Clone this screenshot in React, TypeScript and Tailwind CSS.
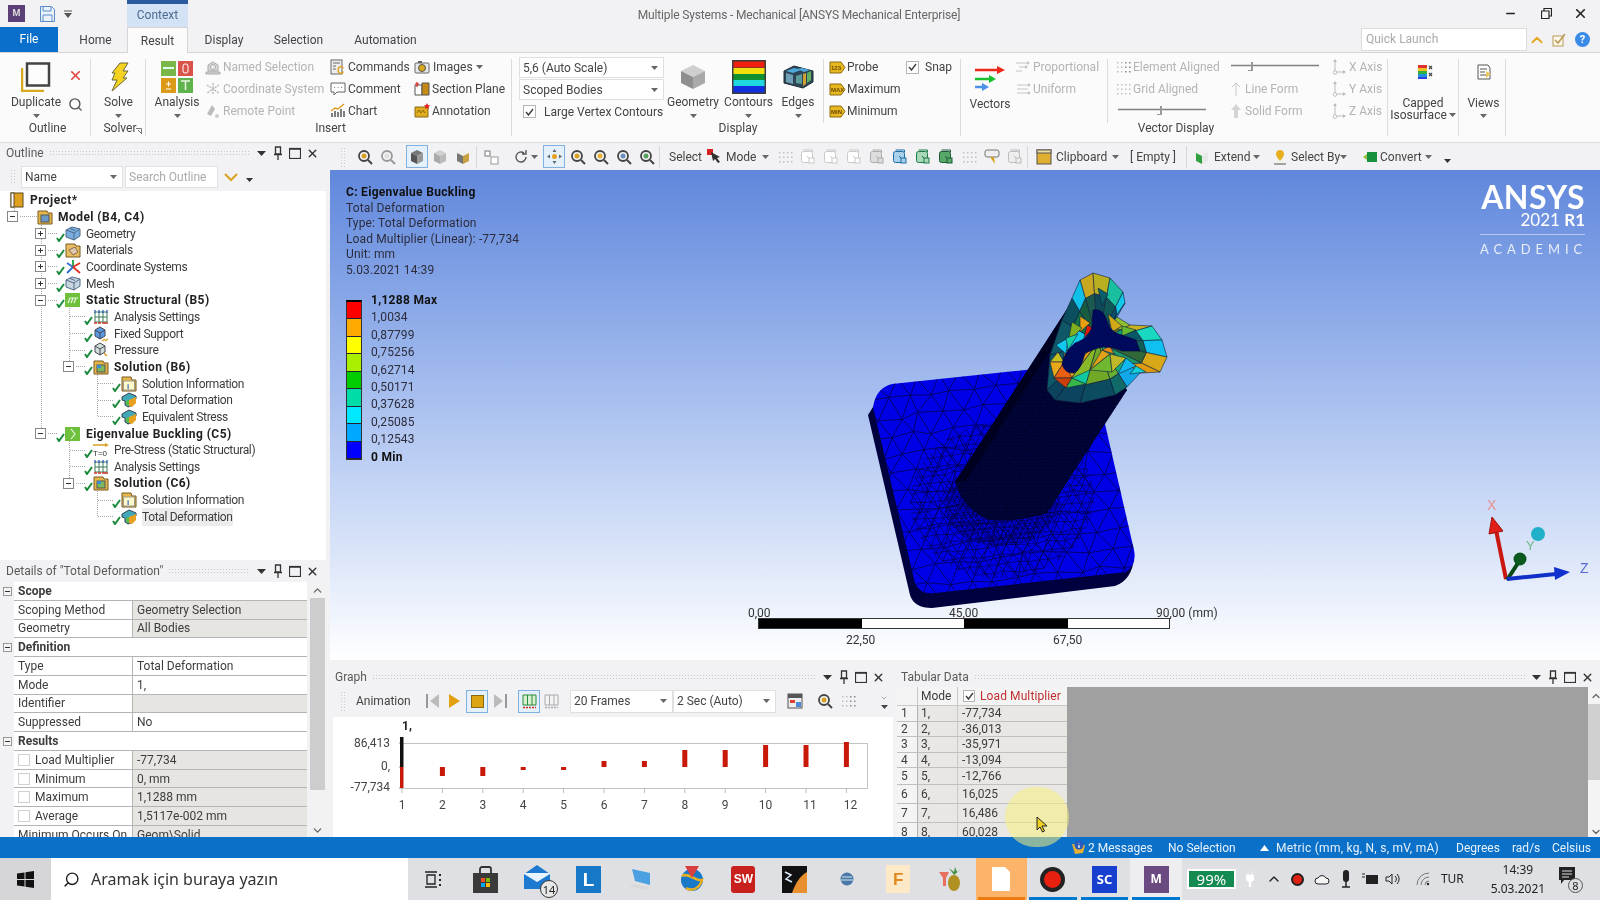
import type { ReactNode } from "react"
import { Search, X, Minus, ChevronUp } from "lucide-react"

function Svg({ w = 16, h = 16, vb, children }: { w?: number; h?: number; vb?: string; children: ReactNode }) {
  return (
    <svg width={w} height={h} viewBox={vb ?? `0 0 ${w} ${h}`} className="shrink-0 block">
      {children}
    </svg>
  )
}

const Caret = ({ c = "#666" }: { c?: string }) => (
  <svg width="7" height="4" viewBox="0 0 7 4" className="shrink-0 block">
    <path d="M0 0h7L3.5 4z" fill={c} />
  </svg>
)

/* ---------- ribbon icons ---------- */

const DuplicateIcon = () => (
  <Svg w={30} h={30}>
    <path d="M1 6v23h22" fill="none" stroke="#d8a91e" strokeWidth="2.5" />
    <rect x="6" y="1.5" width="22" height="22" fill="#fdfdfd" stroke="#444" strokeWidth="2.5" />
  </Svg>
)
const BoltIcon = () => (
  <Svg w={20} h={30}>
    <path d="M11 1h8l-5 8h5L14 16h4L3 29l5-11H3l3-7H3z" fill="#f5d21f" stroke="#6a6a3a" strokeWidth="1" />
  </Svg>
)
const AnalysisIcon = () => (
  <Svg w={32} h={32}>
    <rect x="0" y="0" width="15" height="15" fill="#7ab648" />
    <rect x="2" y="6" width="11" height="2" fill="#dfe" />
    <rect x="17" y="0" width="15" height="15" fill="#d9534a" />
    <rect x="22" y="3" width="5" height="9" rx="2" fill="none" stroke="#fff" />
    <rect x="0" y="17" width="15" height="15" fill="#dd9a18" />
    <path d="M5 23h5M7.500 20.500v5M5 28h5" stroke="#fff" />
    <rect x="17" y="17" width="15" height="15" fill="#5fb34d" />
    <path d="M20 20h9M24.500 20v9" stroke="#e8f8e0" strokeWidth="1.500" />
  </Svg>
)
const NamedIcon = () => (
  <Svg>
    <path d="M1 13h14v2H1zM3 12V6l5-3 5 3v6z" fill="#d8d8d8" stroke="#aaa" />
    <circle cx="8" cy="8" r="2.500" fill="#eee" stroke="#aaa" />
  </Svg>
)
const CoordIcon = () => (
  <Svg>
    <path d="M8 2v12M2 4l12 8M14 4L2 12" stroke="#bdbdbd" strokeWidth="1.500" strokeDasharray="2 1" />
  </Svg>
)
const RemoteIcon = () => (
  <Svg>
    <path d="M2 11l5-9 3 4-4 7z" fill="#bbb" />
    <circle cx="12" cy="13" r="2" fill="#ccc" />
  </Svg>
)
const CommandsIcon = () => (
  <Svg>
    <rect x="1" y="1" width="11" height="14" fill="#eee" stroke="#666" />
    <path d="M3 4h7M3 7h3M3 10h3" stroke="#666" />
    <text x="7" y="15" fontSize="10" fontWeight="700" fill="#e0a020" fontFamily="Liberation Sans, sans-serif">C</text>
  </Svg>
)
const CommentIcon = () => (
  <Svg>
    <path d="M1 2h14v9H7l-3 3v-3H1z" fill="#fff" stroke="#666" />
    <path d="M4 6.500h1M7.500 6.500h1M11 6.500h1" stroke="#888" />
  </Svg>
)
const ChartIcon = () => (
  <Svg>
    <path d="M2 14v-4M5 14V8M8 14V9M11 14V6M14 14V8" stroke="#555" strokeWidth="1.500" />
    <path d="M1 8l4-3 3 1 6-5" fill="none" stroke="#e09a20" strokeWidth="1.500" />
  </Svg>
)
const ImagesIcon = () => (
  <Svg>
    <rect x="1" y="4" width="14" height="10" rx="1" fill="#e8e8e8" stroke="#666" />
    <circle cx="8" cy="9" r="3.500" fill="#d8a91e" stroke="#555" />
    <rect x="4" y="2" width="4" height="2" fill="#666" />
  </Svg>
)
const SectionIcon = () => (
  <Svg>
    <path d="M1 4h7v10H1z" fill="#fff" stroke="#555" />
    <path d="M8 2h7v12H8z" fill="#c58a15" stroke="#555" />
    <path d="M3 1v5M1 3h4" stroke="#e02020" strokeWidth="1.200" />
  </Svg>
)
const AnnotationIcon = () => (
  <Svg>
    <path d="M1 4h13v10H1z" fill="#e0ac1e" stroke="#8a6a10" />
    <path d="M3 10l2-3 2 3 2-3 2 3" fill="none" stroke="#8a6a10" />
    <path d="M13 0l1 2 2 .5-1.500 1.500.3 2-1.800-1-1.800 1 .3-2L10 2.500l2-.5z" fill="#e02020" />
  </Svg>
)
const CubeIcon = () => (
  <Svg w={26} h={26}>
    <path d="M13 1l12 6-12 6L1 7z" fill="#cfcfcf" />
    <path d="M1 7l12 6v12L1 19z" fill="#8f8f8f" />
    <path d="M25 7l-12 6v12l12-6z" fill="#a9a9a9" />
  </Svg>
)
const ContoursIcon = () => (
  <Svg w={34} h={34}>
    <rect x="0" y="0" width="34" height="34" fill="#3c3c3c" />
    <rect x="1.500" y="1.500" width="31" height="6" fill="#f02010" />
    <rect x="1.500" y="8" width="31" height="6" fill="#f0e010" />
    <rect x="1.500" y="14" width="31" height="6" fill="#109030" />
    <rect x="1.500" y="20" width="31" height="6" fill="#20d8e0" />
    <rect x="1.500" y="26" width="31" height="6.500" fill="#1030e0" />
  </Svg>
)
const EdgesIcon = () => (
  <Svg w={31} h={24}>
    <path d="M1 6l10-5 19 5v11l-10 6-19-5z" fill="#2f4656" stroke="#1c2c36" />
    <path d="M3 6l8-3 7 2-8 3zM14 4l5-1 8 2-6 2z" fill="#4ba8d8" />
    <path d="M3 8l7 2v9l-7-2z" fill="#6fa0b8" />
    <path d="M20 9l3-1v11l-3 2z" fill="#d0a030" />
    <path d="M24 8l4-2v9l-4 3z" fill="#5fb060" />
    <path d="M13 11l6-2v10l-6-1z" fill="#5a9a9a" />
  </Svg>
)
const TagIcon = ({ t }: { t: string }) => (
  <svg width="17" height="13" viewBox="0 0 17 13" className="shrink-0 block">
    <path d="M1 1h11l4 5.500-4 5.500H1z" fill="#e8b820" stroke="#8a6a10" />
    <text x="2" y="9" fontSize="6" fontWeight="700" fill="#6a4a00" fontFamily="Liberation Sans, sans-serif">{t}</text>
  </svg>
)
const VectorsIcon = () => (
  <Svg w={30} h={26}>
    <path d="M0 5h23" stroke="#f02818" strokeWidth="2.500" />
    <path d="M22 1l8 4-8 4z" fill="#f02818" />
    <path d="M0 14h15" stroke="#18c030" strokeWidth="2.500" />
    <path d="M14 10l7 4-7 4z" fill="#18c030" />
    <path d="M0 22h7" stroke="#4a90e8" strokeWidth="2.500" />
    <path d="M7 18l7 4-7 4z" fill="#4a90e8" />
  </Svg>
)
const ProportionalIcon = () => (
  <Svg w={15} h={14}>
    <path d="M0 3h13M3 7h8M0 11h6" stroke="#c4c4c4" />
    <path d="M11 1l3 2-3 2zM9 5l3 2-3 2z" fill="#c4c4c4" />
  </Svg>
)
const UniformIcon = () => (
  <Svg w={15} h={14}>
    <path d="M1 3h11M1 7h11M1 11h11" stroke="#c4c4c4" />
    <path d="M12 1l3 2-3 2zM12 9l3 2-3 2z" fill="#c4c4c4" />
  </Svg>
)
const DotsIcon = ({ dark = false }: { dark?: boolean }) => (
  <Svg>
    {[2, 6, 10, 14].map((x) =>
      [3, 7.5, 12].map((y) => (
        <rect key={`${x}-${y}`} x={x} y={y} width="1.500" height="1.500" fill={dark && x > 8 ? "#888" : "#c0c0c0"} />
      ))
    )}
  </Svg>
)
const Slider = ({ w, at }: { w: number; at: number }) => (
  <svg width={w} height="11" viewBox={`0 0 ${w} 11`} className="block">
    <path d={`M0 3.500h${w}`} stroke="#808080" strokeWidth="1.500" />
    <path d={`M${at} 0h2v9h-5v-1h3z`} fill="#999" />
  </svg>
)
const AxisIcon = () => (
  <Svg w={15} h={16}>
    <path d="M3 2v11M5 13h7" stroke="#bbb" />
    <path d="M3 0l2 3H1zM14 13l-3 2v-4z" fill="#bbb" />
    <circle cx="3" cy="13.500" r="1.800" fill="#fff" stroke="#bbb" />
  </Svg>
)
const CappedIcon = () => (
  <Svg>
    <rect x="0" y="1" width="9" height="3" fill="#e03030" />
    <rect x="0" y="4" width="9" height="3" fill="#f0c020" />
    <rect x="0" y="7" width="9" height="3" fill="#30b040" />
    <rect x="0" y="10" width="9" height="3" fill="#2090e0" />
    <rect x="0" y="13" width="9" height="2" fill="#3040e0" />
    <path d="M11 2l3 3M14 2l-3 3M11 9l3 3M14 9l-3 3" stroke="#444" strokeWidth="1.200" />
  </Svg>
)
const ViewsIcon = () => (
  <Svg>
    <path d="M2 1h10l2 3v11H2z" fill="#fff" stroke="#555" />
    <path d="M4 5h7M4 8h5M4 11h6" stroke="#555" />
    <path d="M10 7l5 3-5 4z" fill="#e8c860" />
  </Svg>
)

/* ---------- toolbar icons ---------- */

const ZoomIco = ({ dot = "#d8a020", ring = "#444" }: { dot?: string; ring?: string }) => (
  <Svg>
    <circle cx="7" cy="7" r="5" fill="none" stroke={ring} strokeWidth="1.800" />
    <circle cx="7" cy="7" r="2.500" fill={dot} />
    <path d="M11 11l4 4" stroke={ring} strokeWidth="2" />
  </Svg>
)
const BoxIco = ({ top = "#777", left = "#555", right = "#999" }: { top?: string; left?: string; right?: string }) => (
  <Svg>
    <path d="M8 1l6 3-6 3-6-3z" fill={top} />
    <path d="M2 4l6 3v8l-6-3z" fill={left} />
    <path d="M14 4l-6 3v8l6-3z" fill={right} />
  </Svg>
)
const SelIco = ({ c = "#c9c9c9", h = "#fff" }: { c?: string; h?: string }) => (
  <Svg>
    <rect x="1.500" y="2.500" width="11" height="11" rx="2" fill={h} stroke={c} />
    <path d="M3.500 1h9v2M7 7l3 3" fill="none" stroke={c} />
    <rect x="9" y="9" width="5" height="5" fill={h} stroke={c} />
  </Svg>
)

/* ---------- ribbon layout ---------- */

const Big = ({ w, icon, label, ml, arrow = true }: { w: string; icon: ReactNode; label: string; ml?: string; arrow?: boolean }) => (
  <div className={`${w} ${ml ?? ""} flex flex-col items-center shrink-0`}>
    <div className="h-[37px] flex items-center justify-center">{icon}</div>
    <div className="h-[16px] leading-[16px] whitespace-nowrap">{label}</div>
    {arrow && (
      <div className="h-[12px] flex items-center">
        <Caret />
      </div>
    )}
  </div>
)

const Row = ({ icon, label, off, gap = "gap-[2px]" }: { icon: ReactNode; label: string; off?: boolean; gap?: string }) => (
  <div className={`h-[22px] flex items-center whitespace-nowrap ${gap} ${off ? "text-[#b4b4b4]" : ""}`}>
    {icon}
    <span>{label}</span>
  </div>
)

const Check = ({ size = "w-[13px] h-[13px]", on = true }: { size?: string; on?: boolean }) => (
  <span className={`${size} border border-[#b5b5b5] bg-white flex items-center justify-center shrink-0`}>
    {on && (
      <svg width="9" height="8" viewBox="0 0 9 8">
        <path d="M1 4l2.500 3L8 1" fill="none" stroke="#444" strokeWidth="1.500" />
      </svg>
    )}
  </span>
)

const Combo = ({ w, text, h = "h-[21px]" }: { w: string; text: string; h?: string }) => (
  <div className={`${w} ${h} bg-white border border-[#e0e0e0] flex items-center justify-between px-[3px] pr-[5px] shrink-0`}>
    <span className="whitespace-nowrap">{text}</span>
    <Caret />
  </div>
)

const Group = ({ w, label, children, extra, pad = "" }: { w: string; label?: string; children: ReactNode; extra?: ReactNode; pad?: string }) => (
  <div className={`${w} h-[77px] mt-[6px] border-r border-[#dcdcdc] flex flex-col shrink-0`}>
    <div className="h-[63px] flex">{children}</div>
    {label && (
      <div className={`h-[14px] leading-[13px] text-center whitespace-nowrap relative ${pad}`}>
        {label}
        {extra}
      </div>
    )}
  </div>
)

function Ribbon() {
  return (
    <div className="h-[90px] bg-[#fbfbfb] flex text-[#444] shrink-0 border-t border-[#d5d5d8] border-b-0">
      <Group w="w-[91px]" label="Outline" pad="pl-[5px]">
        <Big w="w-[60px]" ml="ml-[6px]" icon={<DuplicateIcon />} label="Duplicate" />
        <div className="w-[18px] flex flex-col items-center">
          <div className="h-[33px] flex items-center justify-center">
            <X size={15} color="#e0443a" strokeWidth={2.500} />
          </div>
          <div className="h-[4px]" />
          <div className="h-[16px] flex items-center">
            <Search size={15} color="#555" strokeWidth={2.200} />
          </div>
        </div>
      </Group>
      <Group
        w="w-[55px]"
        label="Solver"
        pad="pl-[4px]"
        extra={
          <svg width="6" height="6" viewBox="0 0 6 6" className="absolute right-[3px] top-[6px]">
            <path d="M0 .5h5.500V6M2 2l3 3" fill="none" stroke="#777" />
          </svg>
        }
      >
        <Big w="w-[55px]" icon={<BoltIcon />} label="Solve" />
      </Group>
      <Group w="w-[366px]" label="Insert" pad="pl-[4px]">
        <Big w="w-[50px]" ml="ml-[6px]" icon={<AnalysisIcon />} label="Analysis" />
        <div className="ml-[3px] w-[125px] shrink-0 -mt-[3px]">
          <Row off icon={<NamedIcon />} label="Named Selection" />
          <Row off icon={<CoordIcon />} label="Coordinate System" />
          <Row off icon={<RemoteIcon />} label="Remote Point" />
        </div>
        <div className="w-[84px] shrink-0 -mt-[3px]">
          <Row icon={<CommandsIcon />} label="Commands" />
          <Row icon={<CommentIcon />} label="Comment" />
          <Row icon={<ChartIcon />} label="Chart" />
        </div>
        <div className="shrink-0 -mt-[3px]">
          <div className="h-[22px] flex items-center gap-[3px]">
            <ImagesIcon />
            <span>Images</span>
            <Caret />
          </div>
          <Row icon={<SectionIcon />} label="Section Plane" />
          <Row icon={<AnnotationIcon />} label="Annotation" />
        </div>
      </Group>
      <Group w="w-[449px]" label="Display" pad="pl-[4px]">
        <div className="ml-[7px] w-[145px] shrink-0 flex flex-col gap-[1px] -mt-[2px]">
          <Combo w="w-[145px]" text="5,6 (Auto Scale)" />
          <Combo w="w-[145px]" text="Scoped Bodies" />
          <div className="h-[21px] flex items-center gap-[8px] pl-[4px] whitespace-nowrap">
            <Check />
            Large Vertex Contours
          </div>
        </div>
        <Big w="w-[54px]" ml="ml-[2px]" icon={<CubeIcon />} label="Geometry" />
        <Big w="w-[55px]" ml="ml-[1px]" icon={<ContoursIcon />} label="Contours" />
        <Big w="w-[44px]" icon={<EdgesIcon />} label="Edges" />
        <div className="ml-[3px] w-px h-[64px] bg-[#dcdcdc] shrink-0" />
        <div className="ml-[5px] w-[77px] shrink-0 -mt-[3px]">
          <Row icon={<TagIcon t="123" />} label="Probe" gap="gap-[1px]" />
          <Row icon={<TagIcon t="MAX" />} label="Maximum" gap="gap-[1px]" />
          <Row icon={<TagIcon t="MIN" />} label="Minimum" gap="gap-[1px]" />
        </div>
        <div className="h-[22px] -mt-[3px] flex items-center gap-[6px] whitespace-nowrap">
          <Check />
          Snap
        </div>
      </Group>
      <Group w="w-[427px]" label="Vector Display" pad="pl-[4px]">
        <Big w="w-[48px]" ml="ml-[5px]" icon={<VectorsIcon />} label="Vectors" arrow={false} />
        <div className="ml-[2px] w-[91px] shrink-0 -mt-[3px]">
          <Row off icon={<ProportionalIcon />} label="Proportional" />
          <Row off icon={<UniformIcon />} label="Uniform" />
        </div>
        <div className="w-px h-[64px] bg-[#dcdcdc] shrink-0" />
        <div className="ml-[7px] w-[113px] shrink-0 -mt-[3px]">
          <Row off icon={<DotsIcon dark />} label="Element Aligned" />
          <Row off icon={<DotsIcon />} label="Grid Aligned" />
          <div className="h-[22px] flex items-center pl-[3px]">
            <Slider w={88} at={42} />
          </div>
        </div>
        <div className="ml-[3px] w-[100px] shrink-0 -mt-[3px]">
          <div className="h-[22px] flex items-center">
            <Slider w={88} at={20} />
          </div>
          <div className="h-[22px] flex items-center gap-[4px] text-[#b4b4b4]">
            <svg width="10" height="14" viewBox="0 0 10 14">
              <path d="M5 1v13M1 5l4-4 4 4" fill="none" stroke="#c8c8c8" />
            </svg>
            Line Form
          </div>
          <div className="h-[22px] flex items-center gap-[4px] text-[#b4b4b4]">
            <svg width="10" height="14" viewBox="0 0 10 14">
              <path d="M5 0l5 6H7v8H3V6H0z" fill="#d4d4d4" />
            </svg>
            Solid Form
          </div>
        </div>
        <div className="ml-[1px] w-[55px] shrink-0 -mt-[3px]">
          <Row off icon={<AxisIcon />} label="X Axis" />
          <Row off icon={<AxisIcon />} label="Y Axis" />
          <Row off icon={<AxisIcon />} label="Z Axis" />
        </div>
      </Group>
      <Group w="w-[71px]">
        <div className="w-full flex flex-col items-center leading-[12px]">
          <div className="h-[38px] flex items-start pt-[5px] pl-[5px]">
            <CappedIcon />
          </div>
          <div>Capped</div>
          <div className="flex items-center gap-[2px]">
            Isosurface
            <Caret />
          </div>
        </div>
      </Group>
      <Group w="w-[47px]">
        <div className="w-full flex flex-col items-center pl-[3px]">
          <div className="h-[37px] flex items-start pt-[5px]">
            <ViewsIcon />
          </div>
          <div className="h-[16px] leading-[16px]">Views</div>
          <div className="h-[12px] flex items-center">
            <Caret />
          </div>
        </div>
      </Group>
    </div>
  )
}

/* ---------- panels ---------- */

const PanelControls = ({ gap = "gap-[5px]" }: { gap?: string }) => (
  <div className={`flex items-center ${gap} shrink-0 text-[#333]`}>
    <span className="w-[12px] flex justify-center">
      <svg width="9" height="5" viewBox="0 0 9 5">
        <path d="M0 0h9L4.500 5z" fill="#333" />
      </svg>
    </span>
    <svg width="12" height="14" viewBox="0 0 12 14">
      <path d="M3.500 1h5v7h-5zM2 8.500h8M6 9v5" fill="none" stroke="#333" strokeWidth="1.300" />
    </svg>
    <svg width="12" height="12" viewBox="0 0 12 12">
      <rect x=".5" y="1.500" width="11" height="10" fill="none" stroke="#333" strokeWidth="1.200" />
      <path d="M0 2h12" stroke="#333" strokeWidth="1.500" />
    </svg>
    <X size={13} strokeWidth={2.600} color="#333" />
  </div>
)

const PanelTitle = ({ title, cls }: { title: string; cls: string }) => (
  <div className={`${cls} flex items-center gap-[5px] text-[#5a5a5a] shrink-0`}>
    <span className="whitespace-nowrap">{title}</span>
    <div className="flex-1 h-[6px] bg-[radial-gradient(#c6c6c6_0.7px,transparent_0.8px)] bg-[length:3px_3px]" />
    <PanelControls />
  </div>
)

type Kind = "book" | "model" | "geo" | "mat" | "coord" | "mesh" | "static" | "eigen" | "grid" | "fixed" | "press" | "sol" | "info" | "def" | "pre"

const TreeIcon = ({ k }: { k: Kind }) => {
  if (k === "book")
    return (
      <Svg>
        <rect x="2" y="1" width="12" height="14" fill="#e0a020" stroke="#5a4a20" />
        <rect x="2" y="1" width="3" height="14" fill="#fff" stroke="#5a4a20" />
      </Svg>
    )
  if (k === "model" || k === "sol")
    return (
      <Svg>
        <path d="M1 4V2h9l1 2h4v11H1z" fill="#e4b64a" stroke="#7a5a20" />
        <rect x="4" y="6" width="8" height="7" fill={k === "sol" ? "#7cb860" : "#6a9ac8"} stroke="#555" />
        {k === "sol" && <rect x="4" y="6" width="4" height="3" fill="#3a90d0" />}
      </Svg>
    )
  if (k === "geo" || k === "mesh") {
    const f = k === "geo" ? "#7aaee0" : "#c8d4de"
    return (
      <Svg>
        <path d="M1 4l6-3 8 2v7l-6 4-8-3z" fill={f} stroke="#506a88" />
        <path d="M1 4l8 3 6-4M9 7v7M5 2.500l5 2" fill="none" stroke="#506a88" />
      </Svg>
    )
  }
  if (k === "mat")
    return (
      <Svg>
        <path d="M1 4V2h9l1 2h4v11H1z" fill="#e8bc60" stroke="#7a5a20" />
        <path d="M4 8l6-3 3 5-5 3z" fill="#e0c8b0" stroke="#8a6a50" />
      </Svg>
    )
  if (k === "coord")
    return (
      <Svg>
        <path d="M8 8V1" stroke="#20a040" strokeWidth="1.800" />
        <path d="M8 8L2 4M8 8L2 14" stroke="#3070d0" strokeWidth="1.800" />
        <path d="M8 8l7-4M8 8l7 6" stroke="#e03020" strokeWidth="1.800" />
      </Svg>
    )
  if (k === "static")
    return (
      <Svg>
        <rect x="0" y="1" width="15" height="14" fill="#6fc03c" />
        <path d="M3 11l2-5h8M6 11l2-5M9 11l2-5" stroke="#e8f8e0" strokeWidth="1.200" fill="none" />
      </Svg>
    )
  if (k === "eigen")
    return (
      <Svg>
        <rect x="0" y="1" width="15" height="14" fill="#6fc03c" />
        <path d="M6 3l4 5-4 5" stroke="#e8f8e0" fill="none" strokeWidth="1.200" />
      </Svg>
    )
  if (k === "grid")
    return (
      <Svg>
        <path d="M2 3h12v10H2zM6 3v10M10 3v10M2 8h12" fill="none" stroke="#3a7a5a" />
        <path d="M2 1v3M6 1v3M10 1v3M14 1v3" stroke="#2050c0" strokeWidth="1.200" />
        <path d="M1 14h3M5 14h3M9 14h3M12 14h3" stroke="#d03020" strokeWidth="1.500" />
      </Svg>
    )
  if (k === "fixed" || k === "press")
    return (
      <Svg>
        <path d="M2 4l5-3 5 3v6l-5 3-5-3z" fill={k === "fixed" ? "#5a9ae0" : "#d0e0d8"} stroke="#445" />
        <path d="M2 4l5 3 5-3M7 7v6" fill="none" stroke="#445" />
        <path d={k === "fixed" ? "M9 15l3-2M12 15l3-2" : "M11 11l3 3"} stroke="#d8a020" strokeWidth="1.500" />
      </Svg>
    )
  if (k === "info")
    return (
      <Svg>
        <path d="M1 4V1h9l1 3h4v11H1z" fill="#e4b64a" stroke="#7a5a20" />
        <rect x="2.500" y="5" width="11" height="9" fill="#fff8c8" stroke="#999" />
        <text x="6" y="13" fontSize="8" fontWeight="700" fill="#3060c0" fontFamily="Liberation Sans, sans-serif">i</text>
      </Svg>
    )
  if (k === "def")
    return (
      <Svg>
        <path d="M1 5l7-4 7 3v3l-3 2v4l-5 2-3-2V9L1 8z" fill="#40a8b8" stroke="#345" />
        <path d="M8 8l7-3v6l-4 4-3-1z" fill="#e8a020" />
        <path d="M8 8v6l-3-1V9z" fill="#58b848" />
      </Svg>
    )
  return (
    <svg width="16" height="16" viewBox="0 0 16 16" className="shrink-0 block">
      <path d="M0 3h13" stroke="#d8a020" strokeWidth="1.500" />
      <path d="M12 1l4 2-4 2z" fill="#d8a020" />
      <text x="0" y="14" fontSize="8" fill="#333" fontFamily="Liberation Sans, sans-serif">T=0</text>
    </svg>
  )
}

const GreenTick = () => (
  <svg width="9" height="9" viewBox="0 0 9 9" className="shrink-0 block mt-[7px] ml-[2px]">
    <path d="M1 5l2 3 5-7" fill="none" stroke="#1c8a3c" strokeWidth="2" />
  </svg>
)

const Expander = ({ open }: { open: boolean }) => (
  <span className="w-[11px] h-[11px] border border-[#888] bg-white flex items-center justify-center shrink-0 relative">
    <span className="absolute w-[5px] h-px bg-[#333]" />
    {!open && <span className="absolute w-px h-[5px] bg-[#333]" />}
  </span>
)

const treeRows: { d: number; label: string; k: Kind; bold?: boolean; exp?: "open" | "closed"; sel?: boolean }[] = [
  { d: 0, label: "Project*", k: "book", bold: true },
  { d: 1, label: "Model (B4, C4)", k: "model", bold: true, exp: "open" },
  { d: 2, label: "Geometry", k: "geo", exp: "closed" },
  { d: 2, label: "Materials", k: "mat", exp: "closed" },
  { d: 2, label: "Coordinate Systems", k: "coord", exp: "closed" },
  { d: 2, label: "Mesh", k: "mesh", exp: "closed" },
  { d: 2, label: "Static Structural (B5)", k: "static", bold: true, exp: "open" },
  { d: 3, label: "Analysis Settings", k: "grid" },
  { d: 3, label: "Fixed Support", k: "fixed" },
  { d: 3, label: "Pressure", k: "press" },
  { d: 3, label: "Solution (B6)", k: "sol", bold: true, exp: "open" },
  { d: 4, label: "Solution Information", k: "info" },
  { d: 4, label: "Total Deformation", k: "def" },
  { d: 4, label: "Equivalent Stress", k: "def" },
  { d: 2, label: "Eigenvalue Buckling (C5)", k: "eigen", bold: true, exp: "open" },
  { d: 3, label: "Pre-Stress (Static Structural)", k: "pre" },
  { d: 3, label: "Analysis Settings", k: "grid" },
  { d: 3, label: "Solution (C6)", k: "sol", bold: true, exp: "open" },
  { d: 4, label: "Solution Information", k: "info" },
  { d: 4, label: "Total Deformation", k: "def", sel: true },
]

const rowY = (i: number) => 9 + i * 16.67

function TreeGuides() {
  const v: [number, number, number][] = [
    [14, rowY(0) + 6, rowY(1) - 5],
    [41, rowY(1) + 8, rowY(14) - 5],
    [69, rowY(6) + 6, rowY(10) - 5],
    [97, rowY(10) + 6, rowY(13)],
    [69, rowY(14) + 6, rowY(17) - 5],
    [97, rowY(17) + 6, rowY(19)],
  ]
  const h = treeRows.map((r, i) => {
    if (r.d === 0) return ""
    const x = 14 + 28 * (r.d - 1)
    const end = x + (r.d === 1 ? 24 : 16)
    return `M${r.exp ? x + 6 : x} ${rowY(i)}H${end}`
  })
  return (
    <svg width="200" height="360" className="absolute left-0 top-0">
      <path
        d={v.map(([x, a, b]) => `M${x} ${a}V${b}`).join("") + h.join("")}
        stroke="#a8a8a8"
        strokeDasharray="1 1"
        fill="none"
        shapeRendering="crispEdges"
      />
    </svg>
  )
}

function Tree() {
  return (
    <div className="flex-1 bg-white relative text-[#3c3c3c] mr-[4px]">
      <TreeGuides />
      <div className="relative pt-[1px]">
        {treeRows.map((r, i) => {
          const textX = 30 + 28 * r.d
          return (
            <div
              key={i}
              className="h-[16.67px] flex items-center whitespace-nowrap"
              style={{ paddingLeft: r.d === 0 ? 10 : textX - 51 }}
            >
              {r.d > 0 && (
                <>
                  <span className="w-[11px] mr-[8px] shrink-0">{r.exp && <Expander open={r.exp === "open"} />}</span>
                  <span className="w-[12px] shrink-0">{r.d > 1 && <GreenTick />}</span>
                </>
              )}
              <span className="w-[14px] flex justify-center shrink-0">
                <TreeIcon k={r.k} />
              </span>
              <span
                className={`ml-[6px] ${r.bold ? "font-bold text-[#222] tracking-[0.45px]" : "tracking-[-0.35px]"} ${
                  r.sel ? "bg-[#ececec]" : ""
                }`}
              >
                {r.label}
              </span>
            </div>
          )
        })}
      </div>
    </div>
  )
}

type Detail =
  | { section: string }
  | { label: string; value: string; grey?: boolean; box?: boolean }

const details: Detail[] = [
  { section: "Scope" },
  { label: "Scoping Method", value: "Geometry Selection", grey: true },
  { label: "Geometry", value: "All Bodies", grey: true },
  { section: "Definition" },
  { label: "Type", value: "Total Deformation" },
  { label: "Mode", value: "1," },
  { label: "Identifier", value: "", grey: true },
  { label: "Suppressed", value: "No" },
  { section: "Results" },
  { label: "Load Multiplier", value: "-77,734", grey: true, box: true },
  { label: "Minimum", value: "0, mm", grey: true, box: true },
  { label: "Maximum", value: "1,1288 mm", grey: true, box: true },
  { label: "Average", value: "1,5117e-002 mm", grey: true, box: true },
  { label: "Minimum Occurs On", value: "Geom\\Solid", grey: true },
]

function DetailsTable() {
  return (
    <div className="h-[255px] flex overflow-hidden text-[#3c3c3c] shrink-0">
      <div className="w-[307px] shrink-0">
        {details.map((d, i) =>
          "section" in d ? (
            <div key={i} className="h-[18.77px] flex items-center">
              <span className="w-[14px] flex justify-center shrink-0">
                <span className="w-[9px] h-[9px] border border-[#999] bg-[#f4f4f4] flex items-center justify-center">
                  <span className="w-[5px] h-px bg-[#333]" />
                </span>
              </span>
              <span className="flex-1 h-full bg-white border-b border-[#b4b4b4] pl-[4px] font-bold flex items-center">
                {d.section}
              </span>
            </div>
          ) : (
            <div key={i} className="h-[18.77px] flex pl-[14px]">
              <span className="w-[119px] h-full shrink-0 bg-white border-b border-r border-[#b4b4b4] flex items-center pl-[4px] whitespace-nowrap overflow-hidden">
                {d.box && <span className="w-[12px] h-[12px] border border-[#d0d0d0] bg-white mr-[5px] shrink-0" />}
                {d.label}
              </span>
              <span
                className={`flex-1 h-full border-b border-[#b4b4b4] flex items-center pl-[4px] whitespace-nowrap ${
                  d.grey ? "bg-[#e6e5e1]" : "bg-white"
                }`}
              >
                {d.value}
              </span>
            </div>
          )
        )}
      </div>
      <div className="w-[15px] ml-[3px] bg-[#f2f2f2] flex flex-col items-center">
        <div className="h-[16px] flex items-center">
          <ChevronUp size={13} color="#666" strokeWidth={2.500} />
        </div>
        <div className="w-full h-[192px] bg-[#cdcdcd]" />
        <div className="flex-1" />
        <div className="h-[18px] flex items-start rotate-180">
          <ChevronUp size={13} color="#666" strokeWidth={2.500} />
        </div>
      </div>
    </div>
  )
}

function LeftColumn() {
  return (
    <div className="w-[330px] shrink-0 flex flex-col bg-[#f2f2f4] border-t border-[#dcdcdc]">
      <PanelTitle title="Outline" cls="h-[20px] pl-[6px] pr-[7px] mr-[4px]" />
      <div className="h-[28px] flex items-center pl-[10px] gap-[2px] text-[#444] shrink-0">
        <span className="w-[7px] h-[16px] mr-[2px] bg-[radial-gradient(#c8c8c8_0.7px,transparent_0.8px)] bg-[length:3px_3px]" />
        <Combo w="w-[102px]" h="h-[22px]" text="Name" />
        <div className="w-[93px] h-[22px] bg-white border border-[#e0e0e0] flex items-center px-[3px] text-[#aaa] whitespace-nowrap">
          Search Outline
        </div>
        <svg width="14" height="9" viewBox="0 0 14 9" className="ml-[4px]">
          <path d="M1 1l6 6 6-6" fill="none" stroke="#d8a020" strokeWidth="2" />
        </svg>
        <span className="ml-[6px] mt-[6px]">
          <Caret c="#333" />
        </span>
      </div>
      <Tree />
      <PanelTitle title={'Details of "Total Deformation"'} cls="h-[22px] pl-[6px] pr-[7px] mr-[4px]" />
      <DetailsTable />
    </div>
  )
}

/* ---------- graphics toolbar ---------- */

const Sel = ({ children, w = "w-[22px]" }: { children: ReactNode; w?: string }) => (
  <span className={`${w} h-[23px] flex items-center justify-center border border-[#7fb2e0] bg-[#e4f0fb] shrink-0`}>
    {children}
  </span>
)
const Cell = ({ children, w = "w-[23px]" }: { children: ReactNode; w?: string }) => (
  <span className={`${w} flex items-center justify-center shrink-0`}>{children}</span>
)
const TSep = () => <span className="block w-px h-[22px] bg-[#d8d8d8] shrink-0" />

function GraphicsToolbar() {
  return (
    <div className="h-[28px] flex items-center text-[#444] bg-[#f2f2f4] border-t border-[#dcdcdc] shrink-0 whitespace-nowrap">
      <span className="ml-[10px] w-[6px] h-[20px] mr-[7px] bg-[radial-gradient(#c8c8c8_0.7px,transparent_0.8px)] bg-[length:3px_3px] shrink-0" />
      <Cell>
        <ZoomIco />
      </Cell>
      <Cell>
        <ZoomIco dot="#e0e0e0" ring="#999" />
      </Cell>
      <span className="ml-[7px]">
        <Sel>
          <BoxIco />
        </Sel>
      </span>
      <Cell>
        <BoxIco top="#d0d0d0" left="#aaa" right="#bbb" />
      </Cell>
      <Cell>
        <BoxIco top="#eee" left="#777" right="#c8a040" />
      </Cell>
      <span className="ml-[2px]">
        <TSep />
      </span>
      <span className="ml-[2px]">
        <Cell>
          <Svg>
            <rect x="2" y="2" width="5" height="5" fill="#fff" stroke="#777" />
            <rect x="8" y="8" width="7" height="7" fill="#fff" stroke="#999" />
          </Svg>
        </Cell>
      </span>
      <span className="ml-[10px]">
        <Cell w="w-[18px]">
          <Svg>
            <path d="M13 8a5 5 0 1 1-2-4M13 1v4H9" fill="none" stroke="#555" strokeWidth="1.400" />
          </Svg>
        </Cell>
      </span>
      <Cell w="w-[8px]">
        <Caret />
      </Cell>
      <span className="ml-[5px]">
        <Sel>
          <svg width="15" height="15" viewBox="0 0 15 15">
            <path d="M7.500 0l2 3h-4zM7.500 15l-2-3h4zM0 7.500l3-2v4zM15 7.500l-3 2v-4z" fill="#666" />
            <circle cx="7.500" cy="7.500" r="2.500" fill="#e8a020" />
          </svg>
        </Sel>
      </span>
      <span className="ml-px flex">
        <Cell>
          <ZoomIco />
        </Cell>
        <Cell>
          <ZoomIco dot="#e8b030" />
        </Cell>
        <Cell>
          <ZoomIco dot="#6a90c0" />
        </Cell>
        <Cell>
          <ZoomIco dot="#58a060" />
        </Cell>
      </span>
      <span className="ml-[1px]">
        <TSep />
      </span>
      <span className="ml-[9px] w-[38px] shrink-0">Select</span>
      <span className="w-[19px] shrink-0">
        <svg width="15" height="15" viewBox="0 0 15 15">
          <rect x="0" y="0" width="6" height="6" fill="#d82020" />
          <path d="M4 3l9 5-3 1 3 4-2 1-3-4-2 2z" fill="#333" />
        </svg>
      </span>
      <span className="w-[36px] shrink-0">Mode</span>
      <Caret />
      <span className="ml-[4px] flex">
        <Cell w="w-[23px]">
          <DotsIcon />
        </Cell>
        <Cell>
          <SelIco />
        </Cell>
        <Cell>
          <SelIco />
        </Cell>
        <Cell>
          <SelIco />
        </Cell>
        <Cell>
          <SelIco c="#aaa" h="#ddd" />
        </Cell>
        <Cell>
          <SelIco c="#1c6ea8" h="#a8d0e8" />
        </Cell>
        <Cell>
          <SelIco c="#1c7a4a" h="#a8d8b8" />
        </Cell>
        <Cell>
          <SelIco c="#1c5a3a" h="#58a868" />
        </Cell>
        <Cell>
          <DotsIcon />
        </Cell>
        <Cell>
          <Svg>
            <rect x="1" y="1" width="14" height="7" rx="2" fill="#eee" stroke="#777" />
            <path d="M6 8l5 7-1-7z" fill="#d8a020" />
          </Svg>
        </Cell>
        <Cell>
          <SelIco c="#bbb" h="#eee" />
        </Cell>
      </span>
      <span className="ml-[1px]">
        <TSep />
      </span>
      <span className="ml-[8px] mr-[4px] shrink-0">
        <Svg>
          <rect x="1" y="1" width="14" height="14" fill="#e0ae30" stroke="#555" />
          <rect x="1" y="1" width="14" height="3" fill="#f0e0a0" stroke="#555" />
        </Svg>
      </span>
      <span className="w-[56px] shrink-0">Clipboard</span>
      <Caret />
      <span className="ml-[11px] w-[49px] shrink-0">[ Empty ]</span>
      <span className="ml-[7px]">
        <TSep />
      </span>
      <span className="ml-[7px] mr-[4px] shrink-0">
        <BoxIco top="#eee" left="#30a040" right="#e8e8e8" />
      </span>
      <span className="w-[39px] shrink-0">Extend</span>
      <Caret />
      <span className="ml-[14px] mr-[5px] shrink-0">
        <Svg w={12} h={16}>
          <path d="M6 1a4 4 0 0 1 4 4c0 3-4 7-4 7S2 8 2 5a4 4 0 0 1 4-4z" fill="#e8b020" />
          <path d="M0 15h12" stroke="#555" />
        </Svg>
      </span>
      <span className="w-[49px] shrink-0">Select By</span>
      <Caret />
      <span className="ml-[16px] mr-[3px] shrink-0">
        <Svg w={14} h={14}>
          <path d="M0 7l4-3v6z" fill="#9ac040" />
          <rect x="4" y="2" width="10" height="10" fill="#189040" />
        </Svg>
      </span>
      <span className="w-[45px] shrink-0">Convert</span>
      <Caret />
      <span className="ml-[12px] mt-[8px]">
        <Caret c="#333" />
      </span>
    </div>
  )
}

/* ---------- viewport ---------- */

const legend = [
  ["1,1288 Max", "#ff0000", true],
  ["1,0034", "#ffaa00", false],
  ["0,87799", "#ffff00", false],
  ["0,75256", "#aaee00", false],
  ["0,62714", "#00cc00", false],
  ["0,50171", "#00dca8", false],
  ["0,37628", "#00e8ff", false],
  ["0,25085", "#00a8ff", false],
  ["0,12543", "#0000ff", false],
  ["0 Min", "", true],
] as const

function Legend() {
  return (
    <div className="absolute left-[16px] top-[130px] flex">
      <div className="w-[16px] flex flex-col border border-[#333] border-t-[2px] border-t-black h-[160px]">
        {legend.slice(0, 9).map(([l, c]) => (
          <div key={l} className="flex-1 border-b border-[#223]" style={{ background: c }} />
        ))}
      </div>
      <div className="ml-[9px] -mt-[8px] tracking-[0.1px]">
        {legend.map(([l, , b]) => (
          <div key={l} className={`h-[17.4px] leading-[17.4px] whitespace-nowrap ${b ? "font-bold text-[#111] tracking-[0.3px]" : "text-[#2c2c3c]"}`}>
            {l}
          </div>
        ))}
      </div>
    </div>
  )
}

/* seeded jitter so the mesh is stable between renders */
function mulberry(a: number) {
  return () => {
    a |= 0
    a = (a + 0x6d2b79f5) | 0
    let t = Math.imul(a ^ (a >>> 15), 1 | a)
    t = (t + Math.imul(t ^ (t >>> 7), 61 | t)) ^ t
    return ((t ^ (t >>> 14)) >>> 0) / 4294967296
  }
}

// jittered triangular lattice inside a box, returned as one path
function lattice(step: number, seed: number, x0: number, y0: number, x1: number, y1: number) {
  const rnd = mulberry(seed)
  const rows = Math.ceil((y1 - y0) / (step * 0.866)) + 1
  const cols = Math.ceil((x1 - x0) / step) + 2
  const p: [number, number][][] = []
  for (let j = 0; j < rows; j++) {
    const row: [number, number][] = []
    for (let i = 0; i < cols; i++) {
      row.push([
        x0 + i * step + (j % 2 ? step / 2 : 0) + (rnd() - 0.5) * step * 0.3,
        y0 + j * step * 0.866 + (rnd() - 0.5) * step * 0.3,
      ])
    }
    p.push(row)
  }
  let d = ""
  const seg = (a: [number, number], b: [number, number]) => {
    d += `M${a[0].toFixed(1)} ${a[1].toFixed(1)}L${b[0].toFixed(1)} ${b[1].toFixed(1)}`
  }
  for (let j = 0; j < rows; j++) {
    for (let i = 0; i < cols; i++) {
      if (i + 1 < cols) seg(p[j][i], p[j][i + 1])
      if (j + 1 < rows) {
        seg(p[j][i], p[j + 1][i])
        const k = j % 2 ? i + 1 : i - 1
        if (k >= 0 && k < cols) seg(p[j][i], p[j + 1][k])
      }
    }
  }
  return d
}

const headOuter: [number, number, string, string][] = [
  [240, 30, "#c8a820", "#1c5a50"],
  [253, 23, "#b8b020", "#104a58"],
  [270, 28, "#18c0a0", "#105858"],
  [283, 42, "#10c8e8", "#08506a"],
  [285, 53, "#10a8f0", "#286850"],
  [277, 67, "#90c030", "#687820"],
  [290, 75, "#c8b020", "#10a070"],
  [312, 76, "#18d8c0", "#085868"],
  [322, 90, "#10c0f0", "#106058"],
  [327, 107, "#d8a818", "#306838"],
  [320, 122, "#e09a10", "#209868"],
  [300, 123, "#10a8e8", "#18a878"],
  [287, 137, "#106a68", "#68b030"],
  [275, 145, "#0c4c60", "#70a828"],
  [240, 153, "#0c4460", "#88b828"],
  [215, 150, "#0c4460", "#e0a018"],
  [207, 140, "#0c5868", "#d8b018"],
  [210, 105, "#105868", "#10c8e8"],
  [222, 70, "#0c5060", "#107048"],
  [232, 48, "#10c0e8", "#185c40"],
]

const headPatch: [string, string][] = [
  ["247,75 253,78 244,88", "#e81808"],
  ["240,66 250,73 240,82", "#e8a010"],
  ["232,72 242,78 228,92", "#80b020"],
  ["216,95 228,88 226,104", "#10c8f0"],
  ["226,88 238,84 228,100", "#18d0a8"],
  ["210,112 218,102 224,112", "#c8c020"],
  ["210,112 224,112 214,128", "#e8a818"],
  ["214,128 224,112 232,128", "#e86010"],
  ["214,128 232,128 226,138", "#c84008"],
  ["226,138 232,128 246,134", "#38b848"],
  ["246,134 232,128 250,120", "#10c8a0"],
  ["250,120 262,100 270,104", "#e0a018"],
  ["250,120 270,104 272,122", "#70b830"],
  ["270,104 286,108 272,122", "#c0b828"],
  ["286,108 296,116 278,124", "#10b8f0"],
  ["296,116 306,122 290,124", "#10d0d8"],
  ["262,100 270,96 274,104", "#e88810"],
  ["268,64 282,76 272,82", "#d0a818"],
  ["282,76 296,80 282,86", "#68b830"],
  ["258,38 268,44 262,56", "#0a6068"],
]

const platePath = "M33 157Q36 138 52 134L251 113L294 300Q297 314 286 322L95 343Q80 345 75 333Z"
const colPath = "M115 232L233 50L287 140L207 263Q180 272 150 270Q125 262 115 232Z"

function Model() {
  const cx = 258
  const cy = 92
  return (
    <svg width="360" height="380" viewBox="0 0 360 380" className="absolute left-[510px] top-[80px]">
      <defs>
        <clipPath id="plate">
          <path d={platePath} />
        </clipPath>
        <clipPath id="col">
          <path d={colPath} />
        </clipPath>
        <clipPath id="mid">
          <ellipse cx="160" cy="250" rx="92" ry="78" />
        </clipPath>
        <clipPath id="near">
          <ellipse cx="160" cy="252" rx="58" ry="44" />
        </clipPath>
      </defs>
      <path d="M28 165L70 345Q74 358 92 358L275 336Q292 330 294 308L290 290L33 157Z" fill="#00003e" />
      <path d={platePath} fill="#0000e6" />
      <g clipPath="url(#plate)">
        <g transform="rotate(-6 160 230)">
          <path d={lattice(22, 11, 0, 80, 340, 380)} stroke="#000058" strokeWidth="0.8" fill="none" />
          <g clipPath="url(#mid)">
            <path d={lattice(10, 5, 40, 140, 280, 340)} stroke="#000058" strokeWidth="0.7" fill="none" />
          </g>
          <g clipPath="url(#near)">
            <path d={lattice(5, 9, 90, 190, 230, 310)} stroke="#000050" strokeWidth="0.7" fill="none" />
          </g>
        </g>
      </g>
      <path d={colPath} fill="#000740" />
      <g clipPath="url(#col)">
        <path d={lattice(4, 3, 100, 40, 300, 280)} stroke="#000020" strokeWidth="0.5" fill="none" />
      </g>
      <path d="M115 232L125 232L238 58L233 50Z" fill="#000020" />
      <g stroke="#10203a" strokeWidth="0.6" strokeLinejoin="round">
        {headOuter.map((p, i) => {
          const n = headOuter[(i + 1) % headOuter.length]
          const mx = p[0] + (cx - p[0]) * 0.3
          const my = p[1] + (cy - p[1]) * 0.3
          const nx = n[0] + (cx - n[0]) * 0.3
          const ny = n[1] + (cy - n[1]) * 0.3
          return (
            <g key={i}>
              <polygon points={`${p[0]},${p[1]} ${n[0]},${n[1]} ${nx},${ny} ${mx},${my}`} fill={p[2]} />
              <polygon points={`${mx},${my} ${nx},${ny} ${cx},${cy}`} fill={p[3]} />
            </g>
          )
        })}
        {headPatch.map(([pts, c], i) => (
          <polygon key={i} points={pts} fill={c} />
        ))}
      </g>
      <path
        d="M253 60Q262 58 266 68Q268 78 276 83L296 90L300 101L282 101Q268 95 258 98L245 103Q241 120 234 123Q225 124 222 114Q224 102 235 93Q250 88 252 76Z"
        fill="#000a5c"
        stroke="#000438"
        strokeWidth="0.6"
      />
    </svg>
  )
}

function Triad() {
  return (
    <svg width="130" height="130" viewBox="0 0 130 130" className="absolute left-[1140px] top-[310px]">
      <text x="17" y="30" fontSize="14" fill="#e89090" fontFamily="Liberation Sans, sans-serif">X</text>
      <text x="56" y="70" fontSize="13" fill="#70b888" fontFamily="Liberation Sans, sans-serif">Y</text>
      <text x="110" y="93" fontSize="14" fill="#5868d8" fontFamily="Liberation Sans, sans-serif">Z</text>
      <path d="M36 99L26 50" stroke="#c81810" strokeWidth="4" />
      <path d="M22 37L19 54L33 51Z" fill="#e02018" stroke="#a01008" />
      <path d="M37 100L50 80" stroke="#0a4a18" strokeWidth="4" />
      <circle cx="50" cy="79" r="6.500" fill="#0a5a20" />
      <path d="M37 99L86 94" stroke="#1030c8" strokeWidth="4" />
      <path d="M100 92L84 87L85 100Z" fill="#1030d0" />
      <circle cx="68" cy="54" r="7" fill="#20b0c8" />
    </svg>
  )
}

function ScaleBar() {
  const top = ["0,00", "45,00", "90,00 (mm)"]
  return (
    <div className="absolute left-[428px] top-[434px] w-[412px] text-[#333]">
      <div className="relative h-[14px]">
        <span className="absolute left-[-10px] top-0">{top[0]}</span>
        <span className="absolute left-[191px] top-0">{top[1]}</span>
        <span className="absolute left-[398px] top-0 whitespace-nowrap">{top[2]}</span>
      </div>
      <div className="h-[11px] flex border border-[#333] bg-white">
        <div className="w-[103px] bg-black" />
        <div className="w-[102px]" />
        <div className="w-[104px] bg-black" />
      </div>
      <div className="relative h-[14px] mt-[2px]">
        <span className="absolute left-[88px] top-0">22,50</span>
        <span className="absolute left-[295px] top-0">67,50</span>
      </div>
    </div>
  )
}

function Viewport() {
  return (
    <div className="h-[490px] relative overflow-hidden bg-linear-to-b from-[#6087dc] to-[#ffffff] shrink-0 text-[#2c2c3c]">
      <div className="absolute left-[16px] top-[15px] leading-[15.6px] whitespace-nowrap tracking-[0.13px]">
        <div className="font-bold text-[#111] tracking-[0.3px]">C: Eigenvalue Buckling</div>
        <div>Total Deformation</div>
        <div>Type: Total Deformation</div>
        <div>Load Multiplier (Linear): -77,734</div>
        <div>Unit: mm</div>
        <div>5.03.2021 14:39</div>
      </div>
      <Legend />
      <div className="absolute right-[15px] top-[13px] w-[105px] text-white font-['Lato',sans-serif] text-right">
        <div className="text-[32px] leading-[28px] font-bold tracking-[0.5px] whitespace-nowrap">ANSYS</div>
        <div className="text-[17px] leading-[18px] whitespace-nowrap">
          2021 <b>R1</b>
        </div>
        <div className="h-px bg-[#b8ccf0] mt-[5px]" />
        <div className="text-[13px] leading-[16px] mt-[6px] tracking-[4.9px] whitespace-nowrap text-left text-[#e8eefa]">ACADEMIC</div>
      </div>
      <Model />
      <ScaleBar />
      <Triad />
    </div>
  )
}

/* ---------- bottom panels ---------- */

const bars: [number, number][] = [
  [765, 786],
  [765, 774],
  [765, 774],
  [765, 768],
  [765, 768],
  [759, 765],
  [759, 765],
  [748, 765],
  [748, 765],
  [743, 765],
  [743, 765],
  [740, 765],
]

function Chart() {
  const x = (i: number) => 402 + i * 40.4
  return (
    <svg width="560" height="122" viewBox="333 715 560 122" className="block">
      <rect x="402.500" y="741.500" width="465" height="45" fill="#fff" stroke="#c4c4c4" />
      {bars.map((_, i) => (
        <path key={i} d={`M${x(i)} 786v5`} stroke="#bbb" />
      ))}
      <path d="M399 741h3M399 765h3M399 786h3" stroke="#999" />
      <g fontSize="12" fill="#444" fontFamily="Roboto, sans-serif" textAnchor="end">
        <text x="390" y="745">86,413</text>
        <text x="390" y="768">0,</text>
        <text x="390" y="789">-77,734</text>
      </g>
      <g fontSize="12" fill="#444" fontFamily="Roboto, sans-serif" textAnchor="middle">
        {bars.map((_, i) => (
          <text key={i} x={i > 9 ? x(i) + 4 : x(i)} y="807">{i + 1}</text>
        ))}
      </g>
      <text x="402" y="728" fontSize="12" fontWeight="700" fill="#222" fontFamily="Roboto, sans-serif">1,</text>
      <rect x="400" y="735" width="3.500" height="30" fill="#111" />
      {bars.map(([a, b], i) => (
        <rect key={i} x={x(i) - (i === 0 ? 2 : 2.5)} y={a} width={i === 0 ? 3.5 : 5} height={b - a} fill="#c81808" />
      ))}
    </svg>
  )
}

function GraphPanel() {
  return (
    <div className="w-[560px] ml-[3px] shrink-0 flex flex-col text-[#444]">
      <PanelTitle title="Graph" cls="h-[20px] pl-[2px] pr-[8px] mt-[7px]" />
      <div className="h-[28px] flex items-center shrink-0 whitespace-nowrap">
        <span className="ml-[7px] mr-[10px] w-[6px] h-[20px] bg-[radial-gradient(#c8c8c8_0.7px,transparent_0.8px)] bg-[length:3px_3px] shrink-0" />
        <span className="w-[65px] shrink-0">Animation</span>
        <span className="ml-[2px] w-[20px] flex justify-center shrink-0">
          <Svg w={14} h={14}>
            <path d="M1 0v14" stroke="#999" strokeWidth="2" />
            <path d="M13 0L4 7l9 7z" fill="#bbb" />
          </Svg>
        </span>
        <span className="ml-[1px] w-[20px] flex justify-center shrink-0">
          <Svg w={12} h={14}>
            <path d="M1 0l11 7-11 7z" fill="#e0a010" />
          </Svg>
        </span>
        <span className="ml-[2px]">
          <Sel>
            <span className="w-[13px] h-[13px] bg-[#dca410] border border-[#8a6a10]" />
          </Sel>
        </span>
        <span className="ml-[2px] w-[20px] flex justify-center shrink-0">
          <Svg w={14} h={14}>
            <path d="M1 0l9 7-9 7z" fill="#bbb" />
            <path d="M13 0v14" stroke="#999" strokeWidth="2" />
          </Svg>
        </span>
        <span className="ml-[8px]">
          <Sel>
            <Svg w={15} h={15}>
              <path d="M1 1h13v10H1zM5.500 1v10M10 1v10" fill="#d8f0d0" stroke="#2a8a3a" />
              <path d="M1 13.500h13" stroke="#d03020" strokeDasharray="2 1" strokeWidth="1.500" />
            </Svg>
          </Sel>
        </span>
        <span className="w-[23px] flex justify-center shrink-0">
          <Svg w={15} h={15}>
            <path d="M1 1h13v10H1zM5.500 1v10M10 1v10" fill="#f4f4f4" stroke="#aaa" />
            <path d="M1 13.500h13" stroke="#aaa" strokeDasharray="2 1" strokeWidth="1.500" />
          </Svg>
        </span>
        <span className="ml-[7px] flex">
          <Combo w="w-[103px]" h="h-[23px]" text="20 Frames" />
          <Combo w="w-[103px]" h="h-[23px]" text="2 Sec (Auto)" />
        </span>
        <span className="ml-[11px] shrink-0">
          <Svg>
            <rect x="1" y="1" width="14" height="14" fill="#eee" stroke="#555" />
            <rect x="1" y="1" width="14" height="4" fill="#555" />
            <path d="M3 7h5v3H3z" fill="#e04030" />
            <path d="M9 9h5v5H9z" fill="#4a8ad8" />
          </Svg>
        </span>
        <span className="ml-[14px] shrink-0">
          <ZoomIco />
        </span>
        <span className="ml-[7px] shrink-0">
          <DotsIcon dark />
        </span>
        <span className="ml-[24px] flex flex-col items-center gap-[3px] shrink-0">
          <ChevronUp size={8} className="rotate-180" color="#888" />
          <Caret c="#444" />
        </span>
      </div>
      <div className="h-[122px] bg-white mt-[2px]">
        <Chart />
      </div>
    </div>
  )
}

const tabular: [string, string, string, string][] = [
  ["1", "1,", "-77,734", "h-[15.6px]"],
  ["2", "2,", "-36,013", "h-[15.6px]"],
  ["3", "3,", "-35,971", "h-[15.6px]"],
  ["4", "4,", "-13,094", "h-[15.6px]"],
  ["5", "5,", "-12,766", "h-[17px]"],
  ["6", "6,", "16,025", "h-[18.7px]"],
  ["7", "7,", "16,486", "h-[18.7px]"],
  ["8", "8,", "60,028", "h-[18.7px]"],
]

function TabularPanel() {
  return (
    <div className="w-[707px] ml-[4px] shrink-0 flex flex-col text-[#3c3c3c]">
      <PanelTitle title="Tabular Data" cls="h-[20px] pl-[4px] pr-[10px] mt-[7px]" />
      <div className="flex-1 flex overflow-hidden">
        <div className="w-[170px] shrink-0 bg-[#f4f4f4]">
          <div className="h-[19px] flex border-b border-[#c8c8c8]">
            <span className="w-[21px] border-r border-[#c8c8c8] shrink-0" />
            <span className="w-[40px] border-r border-[#c8c8c8] pl-[3px] leading-[18px] shrink-0">Mode</span>
            <span className="flex-1 flex items-center gap-[5px] pl-[5px] text-[#c03030] whitespace-nowrap tracking-[0.1px]">
              <Check size="w-[12px] h-[12px]" />
              Load Multiplier
            </span>
          </div>
          {tabular.map(([n, m, v, h]) => (
            <div key={n} className={`flex border-b border-[#c0c0c0] ${h}`}>
              <span className="w-[21px] border-r border-[#b0b0b0] pl-[4px] flex items-center bg-[#f4f4f4] shrink-0">{n}</span>
              <span className="w-[40px] border-r border-[#c8c8c8] pl-[3px] flex items-center bg-[#e8e7e3] shrink-0">{m}</span>
              <span className="flex-1 pl-[4px] flex items-center bg-[#e8e7e3]">{v}</span>
            </div>
          ))}
        </div>
        <div className="flex-1 bg-[#a0a0a0]" />
        <div className="w-[16px] bg-[#f4f4f4] flex flex-col items-center shrink-0">
          <div className="h-[17px] flex items-center">
            <ChevronUp size={12} color="#666" strokeWidth={2.500} />
          </div>
          <div className="w-full h-[76px] bg-[#d0d0d0]" />
          <div className="flex-1" />
          <div className="h-[18px] flex items-center rotate-180">
            <ChevronUp size={12} color="#666" strokeWidth={2.500} />
          </div>
        </div>
      </div>
    </div>
  )
}

/* ---------- taskbar ---------- */

const TaskCell = ({ children, bar, bg }: { children: ReactNode; bar?: string; bg?: string }) => (
  <div className={`w-[51.6px] h-full flex items-center justify-center relative shrink-0 ${bg ?? ""}`}>
    {children}
    {bar && <span className={`absolute left-[2px] right-[2px] bottom-0 h-[3px] ${bar}`} />}
  </div>
)

function Taskbar() {
  return (
    <div className="h-[42px] flex items-center bg-[#dfe0e4] shrink-0 text-[#222] font-['Noto_Sans',sans-serif]">
      <div className="w-[51px] h-full bg-[#d6d6d8] flex items-center justify-center shrink-0">
        <svg width="17" height="17" viewBox="0 0 17 17">
          <path d="M0 2.500l7.500-1v6.500H0zM8.500 1.300L17 0v8H8.500zM0 9h7.500v6.500L0 14.500zM8.500 9H17v8l-8.500-1.200z" fill="#111" />
        </svg>
      </div>
      <div className="w-[357px] h-full bg-white flex items-center shrink-0 pl-[12px] gap-[11px]">
        <Search size={17} color="#222" className="-scale-x-100" />
        <span className="text-[16px] text-[#333] whitespace-nowrap">Aramak için buraya yazın</span>
      </div>
      <TaskCell>
        <svg width="17" height="17" viewBox="0 0 17 17">
          <path d="M0 1h12M0 16h12M2 4h8v9H2z" fill="none" stroke="#222" strokeWidth="1.300" />
          <path d="M15 3v2M15 8v2M15 13v2" stroke="#222" strokeWidth="2" />
        </svg>
      </TaskCell>
      <TaskCell>
        <svg width="25" height="27" viewBox="0 0 25 27">
          <path d="M7 7V3a2 2 0 0 1 2-2h7a2 2 0 0 1 2 2v4" fill="none" stroke="#333" strokeWidth="1.800" />
          <rect x="0" y="7" width="25" height="20" fill="#3a3a3a" />
          <rect x="8" y="12" width="4" height="4" fill="#f25022" />
          <rect x="13" y="12" width="4" height="4" fill="#7fba00" />
          <rect x="8" y="17" width="4" height="4" fill="#00a4ef" />
          <rect x="13" y="17" width="4" height="4" fill="#ffb900" />
        </svg>
      </TaskCell>
      <TaskCell>
        <div className="relative w-[26px] h-[30px]">
          <svg width="26" height="26" viewBox="0 0 26 26" className="absolute left-0 top-0">
            <path d="M0 10L13 1l13 9v15H0z" fill="#1e7ad0" />
            <path d="M0 10l13 8 13-8v-1H0z" fill="#e8f4ff" />
          </svg>
          <span className="absolute right-[-8px] bottom-[-4px] w-[18px] h-[18px] rounded-full bg-[#e8e8e8] border border-[#333] flex items-center justify-center text-[11px] leading-none">
            14
          </span>
        </div>
      </TaskCell>
      <TaskCell>
        <span className="w-[25px] h-[27px] bg-[#1878c8] flex items-center justify-center text-white text-[19px] font-bold leading-none font-['Liberation_Sans',sans-serif]">
          L
        </span>
      </TaskCell>
      <TaskCell>
        <svg width="24" height="24" viewBox="0 0 24 24">
          <path d="M4 2l18 4v12L7 14z" fill="#4aa0e0" />
          <path d="M1 19l16 4 5-2-16-4z" fill="#d8d8d8" />
        </svg>
      </TaskCell>
      <TaskCell>
        <svg width="26" height="26" viewBox="0 0 26 26">
          <circle cx="13" cy="14" r="11" fill="#1a78c8" />
          <path d="M3 10c6-4 14 6 20 4-2 8-10 12-16 8" fill="none" stroke="#e8b020" strokeWidth="2.500" />
          <path d="M6 0l14 0-7 12z" fill="#d84040" />
        </svg>
      </TaskCell>
      <TaskCell>
        <span className="w-[24px] h-[27px] rounded-[3px] bg-[#c8201c] flex items-center justify-center text-white text-[12px] font-bold leading-none font-['Liberation_Sans',sans-serif]">
          SW
        </span>
      </TaskCell>
      <TaskCell>
        <svg width="25" height="27" viewBox="0 0 25 27">
          <rect width="25" height="27" fill="#111" />
          <path d="M10 27C14 16 18 10 25 6v21z" fill="#e89030" />
          <path d="M3 6l6 3-5 4 6 3" fill="none" stroke="#d8e8f8" strokeWidth="1.500" />
        </svg>
      </TaskCell>
      <TaskCell>
        <svg width="14" height="14" viewBox="0 0 14 14">
          <circle cx="7" cy="7" r="6.500" fill="#4a78a8" />
          <path d="M2 5h10M1 8h12" stroke="#d8e8f0" strokeWidth="1.200" />
        </svg>
      </TaskCell>
      <TaskCell>
        <span className="w-[24px] h-[28px] bg-[#fde8c8] flex items-center justify-center text-[#e08a20] text-[17px] font-bold leading-none font-['Liberation_Sans',sans-serif]">
          F
        </span>
      </TaskCell>
      <TaskCell>
        <svg width="24" height="26" viewBox="0 0 24 26">
          <ellipse cx="16" cy="17" rx="6" ry="8" fill="#b09020" />
          <path d="M16 9l-5-7 5 4 1-5 2 5 4-3z" fill="#409040" />
          <path d="M1 6l10 0-3 6v8H5v-8z" fill="#e87060" />
        </svg>
      </TaskCell>
      <TaskCell bg="bg-[#fbb46a]" bar="bg-[#ec7b10]">
        <svg width="19" height="24" viewBox="0 0 19 24">
          <path d="M1 0h12l5 5v18a1 1 0 0 1-1 1H1a1 1 0 0 1-1-1V1a1 1 0 0 1 1-1z" fill="#fff" />
        </svg>
      </TaskCell>
      <TaskCell bar="bg-[#0078d0]">
        <span className="w-[25px] h-[25px] rounded-full bg-[#e82010] border-[4px] border-[#222]" />
      </TaskCell>
      <TaskCell bar="bg-[#0078d0]">
        <span className="w-[25px] h-[27px] bg-[#1840d0] flex items-center justify-center text-white text-[13px] font-bold leading-none">
          SC
        </span>
      </TaskCell>
      <TaskCell bg="bg-[#eeeef0]" bar="bg-[#0078d0]">
        <span className="w-[25px] h-[27px] bg-[#6a4a80] flex items-center justify-center text-white text-[12px] font-bold leading-none">
          M
        </span>
      </TaskCell>
      <div className="ml-[5px] w-[49px] h-[20px] bg-[#138a50] border-[2px] border-white text-white text-[15px] leading-none flex items-center justify-center shrink-0">
        99%
      </div>
      <div className="ml-[2px] flex items-center">
        <span className="w-[24px] flex justify-center">
          <svg width="8" height="16" viewBox="0 0 8 16">
            <path d="M2 0v4M6 0v4M0 4h8v5l-3 2v5H3v-5L0 9z" fill="#fff" stroke="#fff" strokeWidth=".5" />
          </svg>
        </span>
        <span className="w-[24px] flex justify-center">
          <ChevronUp size={16} color="#222" />
        </span>
        <span className="w-[24px] flex justify-center">
          <span className="w-[13px] h-[13px] rounded-full bg-[#e02010] border-[2px] border-[#222]" />
        </span>
        <span className="w-[24px] flex justify-center">
          <svg width="16" height="12" viewBox="0 0 16 12">
            <path d="M4 11a3 3 0 0 1 0-6 4.500 4.500 0 0 1 8 0 3 3 0 0 1 0 6z" fill="#f4f4f4" stroke="#222" />
          </svg>
        </span>
        <span className="w-[24px] flex justify-center">
          <svg width="10" height="18" viewBox="0 0 10 18">
            <rect x="2" y="0" width="6" height="12" rx="3" fill="#222" />
            <path d="M5 12v5M1 17h8" stroke="#222" strokeWidth="1.500" />
          </svg>
        </span>
        <span className="w-[24px] flex justify-center">
          <svg width="16" height="12" viewBox="0 0 16 12">
            <rect x="4" y="2" width="12" height="9" fill="#222" />
            <path d="M0 1h3M0 4h3" stroke="#222" />
          </svg>
        </span>
        <span className="w-[24px] flex justify-center">
          <svg width="17" height="14" viewBox="0 0 17 14">
            <path d="M1 5h3l3-3v10L4 9H1z" fill="none" stroke="#222" />
            <path d="M10 4a4 4 0 0 1 0 6M12 2a7 7 0 0 1 0 10" fill="none" stroke="#222" />
          </svg>
        </span>
        <span className="ml-[8px] w-[18px] flex justify-center">
          <svg width="14" height="14" viewBox="0 0 14 14">
            <path d="M1 13A12 12 0 0 1 13 1M5 13a8 8 0 0 1 8-8M9 13a4 4 0 0 1 4-4" fill="none" stroke="#777" />
            <circle cx="12" cy="12" r="1.200" fill="#222" />
          </svg>
        </span>
      </div>
      <span className="ml-[9px] w-[33px] text-[12px] shrink-0">TUR</span>
      <div className="ml-[12px] w-[64px] text-center text-[12px] leading-[19px] shrink-0">
        <div>14:39</div>
        <div>5.03.2021</div>
      </div>
      <div className="ml-[9px] relative w-[22px] h-[24px] shrink-0">
        <svg width="16" height="18" viewBox="0 0 16 18" className="absolute left-0 top-0">
          <path d="M0 0h16v13H5l-3 4v-4H0z" fill="#222" />
          <path d="M3 4h10M3 7h10M3 10h7" stroke="#dfe0e4" />
        </svg>
        <span className="absolute right-[-2px] bottom-[-2px] w-[15px] h-[15px] rounded-full bg-[#dfe0e4] border border-[#555] text-[11px] leading-none flex items-center justify-center">
          8
        </span>
      </div>
    </div>
  )
}

export default function App() {
  return (
    <div className="w-[1600px] h-[900px] relative overflow-hidden flex flex-col bg-[#f2f2f4] text-[12px] font-['Roboto',sans-serif] blur-[0.4px]">
      {/* title bar */}
      <div className="h-[27px] flex shrink-0">
        <div className="w-[127px] flex items-center shrink-0">
          <span className="ml-[8px] w-[17px] h-[17px] bg-[#5d3f78] flex items-center justify-center text-[#ddd] text-[9px] font-bold">M</span>
          <span className="ml-[15px]">
            <svg width="15" height="16" viewBox="0 0 15 16">
              <path d="M.5.5h11l3 3v12H.5z" fill="#eaf2fb" stroke="#5a8ac8" />
              <path d="M3 1v4h8V1M3 15v-6h9v6" fill="none" stroke="#5a8ac8" />
            </svg>
          </span>
          <span className="ml-[9px]">
            <svg width="8" height="8" viewBox="0 0 8 8">
              <path d="M0 1h8" stroke="#555" />
              <path d="M0 3h8L4 8z" fill="#555" />
            </svg>
          </span>
        </div>
        <div className="w-[61px] bg-[#d3e2f5] border-t-[4px] border-[#2a5aa0] text-[#4a6a90] text-center leading-[22px] shrink-0">Context</div>
        <div className="w-[1222px] text-center text-[#666] leading-[30px] shrink-0 tracking-[-0.15px]">Multiple Systems - Mechanical [ANSYS Mechanical Enterprise]</div>
        <div className="ml-[94px] flex items-center text-[#222] shrink-0">
          <Minus size={13} strokeWidth={2.500} />
          <svg width="11" height="11" viewBox="0 0 11 11" className="ml-[24px]">
            <path d="M3 3V.5h7.500V8H8M.5 3h7.500v7.500H.5z" fill="none" stroke="#222" strokeWidth="1.200" />
          </svg>
          <X size={15} strokeWidth={2.600} className="ml-[21px]" />
        </div>
      </div>
      {/* tab row */}
      <div className="h-[25px] flex items-stretch text-[#444] shrink-0">
        <div className="w-[58px] bg-[#0a6fcb] text-white text-center leading-[25px] shrink-0">File</div>
        <div className="w-[69px] text-center leading-[27px] shrink-0 pl-[6px]">Home</div>
        <div className="w-[61px] bg-[#fbfbfb] border-x border-t border-[#d5d5d8] text-center leading-[27px] -mb-px relative shrink-0">Result</div>
        <div className="w-[72px] text-center leading-[27px] shrink-0">Display</div>
        <div className="w-[77px] text-center leading-[27px] shrink-0">Selection</div>
        <div className="w-[97px] text-center leading-[27px] shrink-0">Automation</div>
        <div className="ml-[927px] w-[166px] h-[23px] mt-[1px] bg-white border border-[#dcdcdc] text-[#aaa] pl-[4px] leading-[21px] shrink-0">Quick Launch</div>
        <div className="flex items-center pl-[1px] shrink-0 gap-[6px]">
          <ChevronUp size={18} color="#e8a828" strokeWidth={2.600} />
          <svg width="14" height="14" viewBox="0 0 14 14">
            <rect x="1" y="3" width="10" height="10" fill="#fdf8e8" stroke="#b89a58" />
            <path d="M3 7l3 3 7-9" fill="none" stroke="#b89a58" strokeWidth="1.500" />
          </svg>
          <span className="w-[15px] h-[15px] ml-[3px] rounded-full bg-[#3a8ae8] text-white font-bold text-[11px] leading-[15px] text-center">?</span>
        </div>
      </div>
      <Ribbon />
      {/* main area */}
      <div className="h-[695px] flex shrink-0">
        <LeftColumn />
        <div className="flex-1 flex flex-col min-w-0">
          <GraphicsToolbar />
          <Viewport />
          <div className="flex-1 flex bg-[#f2f2f4]">
            <GraphPanel />
            <TabularPanel />
          </div>
        </div>
      </div>
      {/* status bar */}
      <div className="h-[21px] bg-[#0a70c8] text-[#e8f2fc] flex items-center shrink-0 whitespace-nowrap">
        <span className="ml-[1070px] w-[18px] shrink-0">
          <svg width="16" height="16" viewBox="0 0 16 16">
            <path d="M2 4l3 10 8-1 2-8z" fill="#e8b030" />
            <circle cx="9" cy="5" r="4.500" fill="#2a5ac0" />
            <path d="M9 3v.5M9 5v3" stroke="#fff" strokeWidth="1.300" />
          </svg>
        </span>
        <span className="w-[80px] shrink-0">2 Messages</span>
        <span className="w-[89px] shrink-0">No Selection</span>
        <span className="ml-[3px] w-[16px] shrink-0">
          <svg width="9" height="6" viewBox="0 0 9 6">
            <path d="M4.500 0L9 6H0z" fill="#fff" />
          </svg>
        </span>
        <span className="w-[180px] shrink-0 tracking-[0.25px]">Metric (mm, kg, N, s, mV, mA)</span>
        <span className="w-[56px] shrink-0">Degrees</span>
        <span className="w-[40px] shrink-0">rad/s</span>
        <span className="shrink-0">Celsius</span>
      </div>
      <Taskbar />
      {/* pointer highlight */}
      <div className="absolute left-[1005px] top-[787px] w-[64px] h-[60px] rounded-full bg-[#f8ee80]/55" />
      <svg width="12" height="17" viewBox="0 0 12 17" className="absolute left-[1036px] top-[816px]">
        <path d="M1 1v13l3-3 2.500 5 2-1L6 10h5z" fill="#f0d020" stroke="#222" />
      </svg>
    </div>
  )
}
